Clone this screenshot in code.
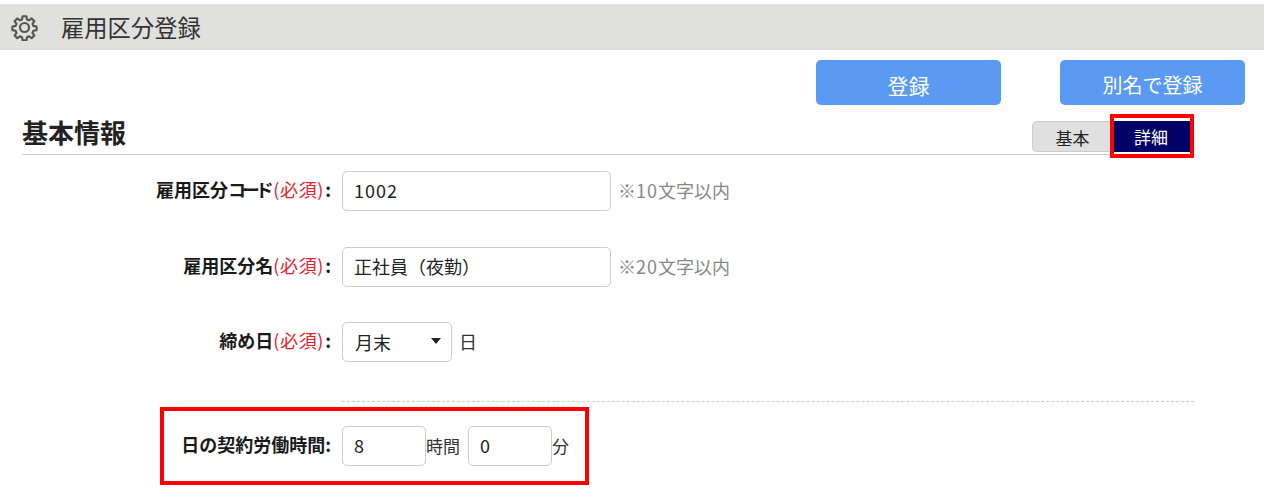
<div class="page">
  <header class="titlebar">
    <svg class="gear" viewBox="0 0 24 24" fill="none" stroke="#555" stroke-width="1.9" stroke-linejoin="round">
      <path d="M10.3 2h3.4l.5 2.9 1.8.75 2.4-1.7 2.4 2.4-1.7 2.4.75 1.8 2.9.5v3.4l-2.9.5-.75 1.8 1.7 2.4-2.4 2.4-2.4-1.7-1.8.75-.5 2.9h-3.4l-.5-2.9-1.8-.75-2.4 1.7-2.4-2.4 1.7-2.4-.75-1.8-2.9-.5v-3.4l2.9-.5.75-1.8-1.7-2.4 2.4-2.4 2.4 1.7 1.8-.75z"/>
      <circle cx="12" cy="12" r="4"/>
    </svg>
    <h1>雇用区分登録</h1>
  </header>

  <div class="actions">
    <button class="primary first">登録</button>
    <button class="primary">別名で登録</button>
  </div>

  <div class="section">
    <h2>基本情報</h2>
    <div class="tabs">
      <span class="tab">基本</span>
      <span class="tab active">詳細</span>
    </div>
    <div class="mark tabmark"></div>
  </div>

  <div class="row first-row">
    <span class="label">雇用区分<span class="kana">コード</span><em>(必須)</em>:</span>
    <span class="field wide"><span class="digits">1002</span></span>
    <span class="hint">※<span class="digits">10</span>文字以内</span>
  </div>
  <div class="row second-row">
    <span class="label">雇用区分名<em>(必須)</em>:</span>
    <span class="field wide">正社員（夜勤）</span>
    <span class="hint">※<span class="digits">20</span>文字以内</span>
  </div>
  <div class="row">
    <span class="label">締め日<em>(必須)</em>:</span>
    <span class="field select">月末<i class="caret"></i></span>
    <span class="unit day">日</span>
  </div>
  <div class="divider"></div>
  <div class="row hours">
    <span class="label">日の契約労働時間:</span>
    <span class="field small"><span class="digits">8</span></span>
    <span class="unit gap">時間</span>
    <span class="field small"><span class="digits">0</span></span>
    <span class="unit">分</span>
    <div class="mark rowmark"></div>
  </div>
</div>

<style>
  :global(body) {
    margin: 0;
    background: #fff;
  }
  .page {
    width: 1264px;
    height: 497px;
    overflow: hidden;
    padding-top: 4px;
    box-sizing: border-box;
    font-family: "Noto Sans CJK JP", "Liberation Sans", sans-serif;
    color: #222;
  }
  .titlebar {
    height: 46px;
    background: #e0e0de;
    display: flex;
    align-items: center;
    padding-left: 11px;
  }
  .gear {
    width: 27px;
    height: 27px;
  }
  h1 {
    margin: 0 0 0 23px;
    font-size: 23.3px;
    font-weight: 400;
    color: #333;
  }
  .actions {
    display: flex;
    justify-content: flex-end;
    padding: 10px 19px 0 0;
  }
  .primary {
    width: 185px;
    height: 45px;
    border: 0;
    border-radius: 5px;
    background: #5a9af2;
    color: #fff;
    font: 400 20px "Noto Sans CJK JP", sans-serif;
    padding: 4px 0 0;
  }
  .primary.first {
    margin-right: 59px;
    font-size: 21px;
  }
  .section {
    position: relative;
    margin: 0 70px 0 22px;
    height: 49px;
    border-bottom: 1px solid #ccc;
    display: flex;
    justify-content: space-between;
  }
  h2 {
    margin: 9px 0 0;
    font-size: 26px;
    line-height: 36px;
    font-weight: 700;
    color: #222;
  }
  .tabs {
    display: flex;
    margin: 16px 4px 0 0;
    height: 31px;
  }
  .tab {
    width: 80px;
    line-height: 31px;
    text-align: center;
    font-size: 17px;
    background: #e0e0e0;
    border: 1px solid #ccc;
    border-right: 0;
    border-radius: 5px 0 0 5px;
    box-sizing: border-box;
    color: #222;
  }
  .tab.active {
    width: 78px;
    background: #000066;
    color: #fff;
    border: 0;
    border-radius: 0;
  }
  .mark {
    position: absolute;
    border: 4px solid #f00;
    box-sizing: border-box;
    pointer-events: none;
  }
  .tabmark {
    right: 0;
    top: 9px;
    width: 84px;
    height: 44px;
  }
  .row {
    position: relative;
    display: flex;
    align-items: center;
    height: 40px;
    margin-bottom: 36px;
    font-size: 18px;
  }
  .first-row {
    margin-top: 16px;
  }
  .second-row {
    margin-bottom: 35px;
  }
  .label {
    width: 331px;
    margin-right: 11px;
    text-align: right;
    font-weight: 700;
    font-size: 18px;
    line-height: 26px;
    padding-bottom: 4px;
    color: #1a1a1a;
    flex: none;
  }
  .kana {
    letter-spacing: -4.3px;
    margin-right: 4px;
  }
  .label em {
    font-style: normal;
    font-weight: 400;
    color: #e8202a;
    letter-spacing: 0.7px;
    margin-right: 1px;
  }
  .field {
    display: flex;
    align-items: center;
    height: 40px;
    box-sizing: border-box;
    border: 1px solid #ccc;
    border-radius: 5px;
    padding: 0 0 3px 11px;
    font-size: 18px;
    color: #222;
    background: #fff;
    flex: none;
    position: relative;
  }
  .digits {
    letter-spacing: 1px;
  }
  .wide {
    width: 269px;
  }
  .select {
    width: 110px;
    padding: 0 0 1px 12px;
  }
  .small {
    width: 84px;
  }
  .caret {
    position: absolute;
    right: 10px;
    top: 15px;
    border-style: solid;
    border-width: 6px 5px 0;
    border-color: #222 transparent transparent;
  }
  .hint {
    margin-left: 7px;
    font-size: 18px;
    padding-bottom: 3px;
    color: #888;
  }
  .unit {
    font-size: 17px;
    color: #333;
    padding-bottom: 2px;
  }
  .gap {
    margin-right: 8px;
  }
  .day {
    margin-left: 7px;
    font-size: 18px;
  }
  .divider {
    margin: 39px 70px 0 342px;
    border-top: 1px dashed #ccc;
  }
  .hours {
    margin-top: 24px;
  }
  .rowmark {
    left: 160px;
    top: -19px;
    width: 429px;
    height: 78px;
  }
</style>
